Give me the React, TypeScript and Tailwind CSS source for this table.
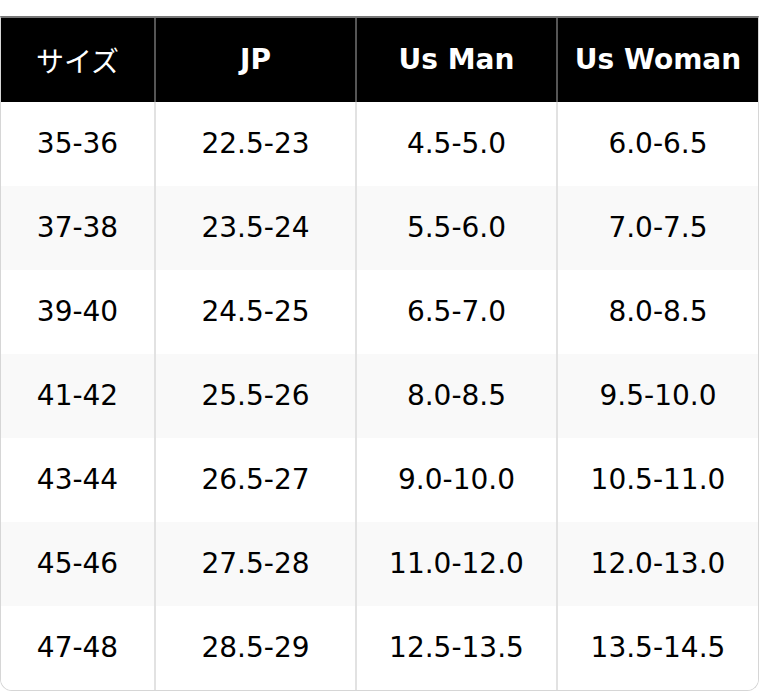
const rows = [
  ['35-36', '22.5-23', '4.5-5.0', '6.0-6.5'],
  ['37-38', '23.5-24', '5.5-6.0', '7.0-7.5'],
  ['39-40', '24.5-25', '6.5-7.0', '8.0-8.5'],
  ['41-42', '25.5-26', '8.0-8.5', '9.5-10.0'],
  ['43-44', '26.5-27', '9.0-10.0', '10.5-11.0'],
  ['45-46', '27.5-28', '11.0-12.0', '12.0-13.0'],
  ['47-48', '28.5-29', '12.5-13.5', '13.5-14.5'],
];

export default function App() {
  return (
    <div className="bg-white pt-4 w-[760px] h-[692px]" style={{ fontFamily: '"DejaVu Sans", "Noto Sans CJK JP", sans-serif' }}>
      <div className="w-[759px] border border-[#d6d6d6] border-t-[#777] border-t-2 rounded-b-xl overflow-hidden">
        <table className="w-full border-collapse text-[28px] text-black">
          <colgroup>
            <col className="w-[154px]" />
            <col className="w-[201px]" />
            <col className="w-[201px]" />
            <col />
          </colgroup>
          <thead>
            <tr className="bg-black text-white h-[84px]">
              <th className="font-normal border-r-2 border-[#555]" style={{ fontFamily: '"Noto Sans CJK JP", sans-serif' }}>サイズ</th>
              <th className="font-bold border-r-2 border-[#555]">JP</th>
              <th className="font-bold border-r-2 border-[#555]">Us Man</th>
              <th className="font-bold">Us Woman</th>
            </tr>
          </thead>
          <tbody>
            {rows.map((r, i) => (
              <tr key={r[0]} className={`h-[84px] ${i % 2 ? 'bg-[#f9f9f9]' : 'bg-white'}`}>
                {r.map((c, j) => (
                  <td key={j} className={`text-center ${j < 3 ? 'border-r-2 border-[#e2e2e2]' : ''}`}>{c}</td>
                ))}
              </tr>
            ))}
          </tbody>
        </table>
      </div>
    </div>
  );
}
